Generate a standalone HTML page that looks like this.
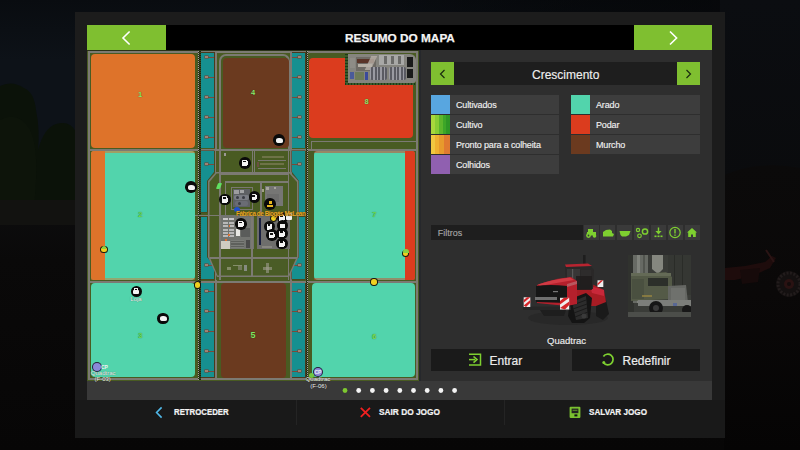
<!DOCTYPE html>
<html><head><meta charset="utf-8">
<style>
*{margin:0;padding:0;box-sizing:border-box}
html,body{width:800px;height:450px;overflow:hidden;background:#0b0b0c;font-family:"Liberation Sans",sans-serif}
.a{position:absolute}
#bg{left:0;top:0;width:800px;height:450px;background:linear-gradient(#090c10 0,#0d1218 60px,#0d1218 140px,#0c0e12 190px,#0c0c0d 215px,#0a0909 260px,#070606 450px)}
.gbtn{background:#7fbf30}
.tx{color:#eee;white-space:nowrap}
.row{background:#3d3d3d;height:19px}
.sw{width:19px;height:19px}
.mlab{text-align:center;line-height:1;white-space:nowrap;font-weight:bold}
.lbl{left:25px;top:4.6px;font-size:9px;color:#f0f0f0;letter-spacing:-0.15px;-webkit-text-stroke:0.15px #f0f0f0}
.fb{background:#3a3a3a;width:15px;height:15px;top:225px}
.bt{font-size:9.2px;font-weight:bold;color:#f4f4f4;top:407px;transform-origin:0 0;-webkit-text-stroke:0.2px #f4f4f4}
</style></head><body>
<div id="bg" class="a"></div>
<!-- background scene -->
<svg class="a" style="left:0;top:0" width="800" height="450">
 <path d="M0 86 Q12 80 24 88 Q34 92 36 110 Q40 130 38 150 Q44 128 56 124 Q70 120 76 132 L76 205 L0 205 Z" fill="#0b1209"/>
 <path d="M0 120 Q18 110 30 130 Q40 150 34 205 L0 205Z" fill="#0e160b" opacity=".7"/>
 <rect x="0" y="200" width="76" height="25" fill="#121210"/>
 <defs><linearGradient id="skyr" x1="0" y1="0" x2="0" y2="1"><stop offset="0" stop-color="#0b0d11"/><stop offset="1" stop-color="#0a0b0d"/></linearGradient></defs><rect x="712" y="0" width="88" height="185" fill="url(#skyr)"/><defs><linearGradient id="topr" x1="0" y1="0" x2="1" y2="0"><stop offset="0" stop-color="#000" stop-opacity="0"/><stop offset="1" stop-color="#050608" stop-opacity=".7"/></linearGradient></defs><rect x="380" y="0" width="340" height="12" fill="url(#topr)"/><defs><linearGradient id="hill" x1="0" y1="0" x2="0" y2="1"><stop offset="0" stop-color="#0b0a0a"/><stop offset="0.45" stop-color="#0a0808"/><stop offset="1" stop-color="#050404"/></linearGradient></defs><path d="M724 175 Q760 160 800 168 L800 450 L724 450Z" fill="url(#hill)"/>
 <path d="M725 268 L745 266 L765 262 L772 256 L776 258 L770 268 L752 276 L735 280 L725 280 Z" fill="#1e0c0c"/>
 <path d="M740 270 L760 268 L758 282 L742 284 Z" fill="#160a0a"/>
 <path d="M766 250 L774 262" stroke="#2a1414" stroke-width="2"/>
 <circle cx="789" cy="284" r="13" fill="#141010"/>
 <circle cx="789" cy="284" r="11" fill="none" stroke="#221c1c" stroke-width="3" stroke-dasharray="2 1.5"/>
 <circle cx="789" cy="284" r="5" fill="#2a1212"/>
 <circle cx="789" cy="284" r="2" fill="#140c0c"/>
 </svg>
<div class="a" style="left:75px;top:12px;width:650px;height:426px;background:#1c1c1c"></div>

<!-- header -->
<div class="a gbtn" style="left:87px;top:25px;width:79px;height:25px"></div>
<div class="a" style="left:166px;top:25px;width:468px;height:25px;background:#000"></div>
<div class="a gbtn" style="left:634px;top:25px;width:78px;height:25px"></div>
<div class="a tx" style="left:345px;top:31px;font-size:11.8px;font-weight:bold;color:#f4f4f4;-webkit-text-stroke:0.25px #f4f4f4">RESUMO DO MAPA</div>
<svg class="a" style="left:120px;top:30px" width="12" height="16" viewBox="0 0 12 16"><path d="M9.6 1.5 L3 8 L9.6 14.5" stroke="#fff" stroke-width="1.6" fill="none"/></svg>
<svg class="a" style="left:667px;top:30px" width="12" height="16" viewBox="0 0 12 16"><path d="M3 1.5 L9.6 8 L3 14.5" stroke="#fff" stroke-width="1.6" fill="none"/></svg>

<!-- map -->
<div id="map" class="a" style="left:0;top:0;width:800px;height:450px;clip-path:inset(50px 381px 69px 87px)">
<div class="a" style="left:87px;top:50px;width:332px;height:331px;background:#495b22;"></div>
<div class="a" style="left:87px;top:50px;width:332px;height:1px;background:#2a3218;"></div>
<div class="a" style="left:88px;top:51px;width:330px;height:2px;background:#7c7a73;"></div>
<div class="a" style="left:88px;top:51px;width:2px;height:329px;background:#7c7a73;"></div>
<div class="a" style="left:88px;top:378px;width:330px;height:2px;background:#7c7a73;"></div>
<div class="a" style="left:416px;top:51px;width:2px;height:329px;background:#7c7a73;"></div>
<div class="a" style="left:88px;top:149px;width:330px;height:2px;background:#7c7a73;"></div>
<div class="a" style="left:88px;top:281px;width:330px;height:1.5px;background:#7c7a73;"></div>
<div class="a" style="left:215px;top:51px;width:1.5px;height:329px;background:#7c7a73;"></div>
<div class="a" style="left:290px;top:51px;width:1.5px;height:329px;background:#7c7a73;"></div>
<div class="a" style="left:198px;top:51px;width:1px;height:329px;background:#a8a49c;background-image:repeating-linear-gradient(#a8a49c 0 1px,#2a2a1a 1px 2px)"></div>
<div class="a" style="left:199px;top:51px;width:1.5px;height:329px;background:#26301a;background-image:repeating-linear-gradient(#1a2410 0 1px,#3a4a20 1px 2px)"></div>
<div class="a" style="left:307px;top:51px;width:1px;height:329px;background:#a8a49c;background-image:repeating-linear-gradient(#a8a49c 0 1px,#2a2a1a 1px 2px)"></div>
<div class="a" style="left:305.5px;top:51px;width:1.5px;height:329px;background:#26301a;background-image:repeating-linear-gradient(#1a2410 0 1px,#3a4a20 1px 2px)"></div>
<div class="a" style="left:200.5px;top:52.0px;width:14px;height:96.0px;background:#4a3a1e;"></div>
<div class="a" style="left:201px;top:52.5px;width:13px;height:95.0px;background:#169090;"></div>
<div class="a" style="left:291.5px;top:52.0px;width:14px;height:96.0px;background:#4a3a1e;"></div>
<div class="a" style="left:292px;top:52.5px;width:13px;height:95.0px;background:#169090;"></div>
<div class="a" style="left:200.5px;top:282.5px;width:14px;height:95px;background:#4a3a1e;"></div>
<div class="a" style="left:201px;top:283px;width:13px;height:94px;background:#169090;"></div>
<div class="a" style="left:291.5px;top:282.5px;width:14px;height:95px;background:#4a3a1e;"></div>
<div class="a" style="left:292px;top:283px;width:13px;height:94px;background:#169090;"></div>
<div class="a" style="left:195px;top:145px;width:25px;height:75px;background:#4a3a1e;clip-path:polygon(5.5px 5.5px,19.5px 5.5px,19.5px 27px,12.5px 36px,12.5px 67.5px,5.5px 67.5px)"></div>
<div class="a" style="left:195px;top:145px;width:25px;height:75px;background:#169090;clip-path:polygon(6px 6px,19px 6px,19px 27px,12px 36px,12px 67px,6px 67px)"></div>
<div class="a" style="left:195px;top:210px;width:25px;height:75px;background:#4a3a1e;clip-path:polygon(5.5px 6.5px,12.5px 6.5px,12.5px 47px,19.5px 56px,19.5px 69.5px,5.5px 69.5px)"></div>
<div class="a" style="left:195px;top:210px;width:25px;height:75px;background:#169090;clip-path:polygon(6px 7px,12px 7px,12px 47px,19px 56px,19px 69px,6px 69px)"></div>
<div class="a" style="left:285px;top:145px;width:25px;height:75px;background:#4a3a1e;clip-path:polygon(6.5px 5.5px,20.5px 5.5px,20.5px 67.5px,13.5px 67.5px,13.5px 36px,6.5px 27px)"></div>
<div class="a" style="left:285px;top:145px;width:25px;height:75px;background:#169090;clip-path:polygon(7px 6px,20px 6px,20px 67px,14px 67px,14px 36px,7px 27px)"></div>
<div class="a" style="left:285px;top:210px;width:25px;height:75px;background:#4a3a1e;clip-path:polygon(13.5px 6.5px,20.5px 6.5px,20.5px 69.5px,6.5px 69.5px,6.5px 56px,13.5px 47px)"></div>
<div class="a" style="left:285px;top:210px;width:25px;height:75px;background:#169090;clip-path:polygon(14px 7px,20px 7px,20px 69px,7px 69px,7px 56px,14px 47px)"></div>
<div class="a" style="left:206px;top:56.5px;width:8px;height:1.5px;background:#7a4a3a;"></div>
<div class="a" style="left:205px;top:56px;width:2.8px;height:2.4px;background:#a08272;box-shadow:0 0 0 0.5px #7a3a2a"></div>
<div class="a" style="left:292px;top:56.5px;width:8px;height:1.5px;background:#7a4a3a;"></div>
<div class="a" style="left:298px;top:56px;width:2.8px;height:2.4px;background:#a08272;box-shadow:0 0 0 0.5px #7a3a2a"></div>
<div class="a" style="left:206px;top:76.5px;width:8px;height:1.5px;background:#7a4a3a;"></div>
<div class="a" style="left:205px;top:76px;width:2.8px;height:2.4px;background:#a08272;box-shadow:0 0 0 0.5px #7a3a2a"></div>
<div class="a" style="left:292px;top:76.5px;width:8px;height:1.5px;background:#7a4a3a;"></div>
<div class="a" style="left:298px;top:76px;width:2.8px;height:2.4px;background:#a08272;box-shadow:0 0 0 0.5px #7a3a2a"></div>
<div class="a" style="left:206px;top:96.5px;width:8px;height:1.5px;background:#7a4a3a;"></div>
<div class="a" style="left:205px;top:96px;width:2.8px;height:2.4px;background:#a08272;box-shadow:0 0 0 0.5px #7a3a2a"></div>
<div class="a" style="left:292px;top:96.5px;width:8px;height:1.5px;background:#7a4a3a;"></div>
<div class="a" style="left:298px;top:96px;width:2.8px;height:2.4px;background:#a08272;box-shadow:0 0 0 0.5px #7a3a2a"></div>
<div class="a" style="left:206px;top:116.5px;width:8px;height:1.5px;background:#7a4a3a;"></div>
<div class="a" style="left:205px;top:116px;width:2.8px;height:2.4px;background:#a08272;box-shadow:0 0 0 0.5px #7a3a2a"></div>
<div class="a" style="left:292px;top:116.5px;width:8px;height:1.5px;background:#7a4a3a;"></div>
<div class="a" style="left:298px;top:116px;width:2.8px;height:2.4px;background:#a08272;box-shadow:0 0 0 0.5px #7a3a2a"></div>
<div class="a" style="left:206px;top:136.5px;width:8px;height:1.5px;background:#7a4a3a;"></div>
<div class="a" style="left:205px;top:136px;width:2.8px;height:2.4px;background:#a08272;box-shadow:0 0 0 0.5px #7a3a2a"></div>
<div class="a" style="left:292px;top:136.5px;width:8px;height:1.5px;background:#7a4a3a;"></div>
<div class="a" style="left:298px;top:136px;width:2.8px;height:2.4px;background:#a08272;box-shadow:0 0 0 0.5px #7a3a2a"></div>
<div class="a" style="left:206px;top:163.5px;width:8px;height:1.5px;background:#7a4a3a;"></div>
<div class="a" style="left:205px;top:163px;width:2.8px;height:2.4px;background:#a08272;box-shadow:0 0 0 0.5px #7a3a2a"></div>
<div class="a" style="left:292px;top:163.5px;width:8px;height:1.5px;background:#7a4a3a;"></div>
<div class="a" style="left:298px;top:163px;width:2.8px;height:2.4px;background:#a08272;box-shadow:0 0 0 0.5px #7a3a2a"></div>
<div class="a" style="left:206px;top:264.5px;width:8px;height:1.5px;background:#7a4a3a;"></div>
<div class="a" style="left:205px;top:264px;width:2.8px;height:2.4px;background:#a08272;box-shadow:0 0 0 0.5px #7a3a2a"></div>
<div class="a" style="left:292px;top:264.5px;width:8px;height:1.5px;background:#7a4a3a;"></div>
<div class="a" style="left:298px;top:264px;width:2.8px;height:2.4px;background:#a08272;box-shadow:0 0 0 0.5px #7a3a2a"></div>
<div class="a" style="left:206px;top:290.5px;width:8px;height:1.5px;background:#7a4a3a;"></div>
<div class="a" style="left:205px;top:290px;width:2.8px;height:2.4px;background:#a08272;box-shadow:0 0 0 0.5px #7a3a2a"></div>
<div class="a" style="left:292px;top:290.5px;width:8px;height:1.5px;background:#7a4a3a;"></div>
<div class="a" style="left:298px;top:290px;width:2.8px;height:2.4px;background:#a08272;box-shadow:0 0 0 0.5px #7a3a2a"></div>
<div class="a" style="left:206px;top:310.5px;width:8px;height:1.5px;background:#7a4a3a;"></div>
<div class="a" style="left:205px;top:310px;width:2.8px;height:2.4px;background:#a08272;box-shadow:0 0 0 0.5px #7a3a2a"></div>
<div class="a" style="left:292px;top:310.5px;width:8px;height:1.5px;background:#7a4a3a;"></div>
<div class="a" style="left:298px;top:310px;width:2.8px;height:2.4px;background:#a08272;box-shadow:0 0 0 0.5px #7a3a2a"></div>
<div class="a" style="left:206px;top:330.5px;width:8px;height:1.5px;background:#7a4a3a;"></div>
<div class="a" style="left:205px;top:330px;width:2.8px;height:2.4px;background:#a08272;box-shadow:0 0 0 0.5px #7a3a2a"></div>
<div class="a" style="left:292px;top:330.5px;width:8px;height:1.5px;background:#7a4a3a;"></div>
<div class="a" style="left:298px;top:330px;width:2.8px;height:2.4px;background:#a08272;box-shadow:0 0 0 0.5px #7a3a2a"></div>
<div class="a" style="left:206px;top:350.5px;width:8px;height:1.5px;background:#7a4a3a;"></div>
<div class="a" style="left:205px;top:350px;width:2.8px;height:2.4px;background:#a08272;box-shadow:0 0 0 0.5px #7a3a2a"></div>
<div class="a" style="left:292px;top:350.5px;width:8px;height:1.5px;background:#7a4a3a;"></div>
<div class="a" style="left:298px;top:350px;width:2.8px;height:2.4px;background:#a08272;box-shadow:0 0 0 0.5px #7a3a2a"></div>
<div class="a" style="left:206px;top:370.5px;width:8px;height:1.5px;background:#7a4a3a;"></div>
<div class="a" style="left:205px;top:370px;width:2.8px;height:2.4px;background:#a08272;box-shadow:0 0 0 0.5px #7a3a2a"></div>
<div class="a" style="left:292px;top:370.5px;width:8px;height:1.5px;background:#7a4a3a;"></div>
<div class="a" style="left:298px;top:370px;width:2.8px;height:2.4px;background:#a08272;box-shadow:0 0 0 0.5px #7a3a2a"></div>
<div class="a" style="left:91px;top:54px;width:104px;height:94px;background:#de732a;border-radius:4px;"></div>
<div class="a" style="left:218.5px;top:53.5px;width:71px;height:96px;background:transparent;border:2px solid #7c7a73;border-radius:7px 7px 0 0;border-bottom:none"></div>
<div class="a" style="left:222.5px;top:58px;width:66px;height:90px;background:#6b3a1f;border-radius:4px;"></div>
<div class="a" style="left:309px;top:57.5px;width:104px;height:80px;background:#db3c1e;border-radius:4px;"></div>
<div class="a" style="left:345px;top:53px;width:71px;height:32px;background:#495b22;"></div>
<div class="a" style="left:345px;top:54px;width:2.5px;height:31px;background:#26401e;background-image:repeating-linear-gradient(#1c3818 0 1.5px,#3a5a2a 1.5px 3px)"></div>
<div class="a" style="left:345px;top:82.5px;width:71px;height:2.5px;background:#26401e;background-image:repeating-linear-gradient(90deg,#1c3818 0 1.5px,#3a5a2a 1.5px 3px)"></div>
<div class="a" style="left:347.5px;top:53.5px;width:68.5px;height:29px;background:#85847e;border-radius:0 6px 3px 0"></div>
<div class="a" style="left:356px;top:57px;width:20px;height:14px;background:#6e6a64;"></div>
<div class="a" style="left:357px;top:59px;width:17px;height:4px;background:#5a3428;"></div>
<div class="a" style="left:358px;top:64px;width:14px;height:3px;background:#c8c0b4;opacity:.8"></div>
<div class="a" style="left:368px;top:56px;width:6px;height:14px;background:#b8b0a8;transform:skewX(-25deg);opacity:.8"></div>
<div class="a" style="left:350px;top:58px;width:5px;height:10px;background:#8e8c86;"></div>
<div class="a" style="left:379px;top:55px;width:25px;height:10px;background:#a8a8a6;"></div>
<div class="a" style="left:384px;top:56px;width:3px;height:8px;background:#6a6a68;"></div>
<div class="a" style="left:391px;top:56px;width:3px;height:8px;background:#6a6a68;"></div>
<div class="a" style="left:398px;top:56px;width:3px;height:8px;background:#6a6a68;"></div>
<div class="a" style="left:407px;top:57px;width:6px;height:10px;background:#1a1a1a;"></div>
<div class="a" style="left:407px;top:69px;width:6px;height:9px;background:#1a1a1a;"></div>
<div class="a" style="left:350px;top:72px;width:4px;height:7px;background:#4a5a9a;"></div>
<div class="a" style="left:365px;top:72px;width:2.5px;height:8px;background:#3a4a9a;"></div>
<div class="a" style="left:355px;top:72px;width:9px;height:8px;background:#6e7a58;"></div>
<div class="a" style="left:370px;top:67px;width:17px;height:13px;background:#6a6a70;border-radius:2px;background-image:repeating-linear-gradient(90deg,#9a9aa2 0 1.5px,#5a5a62 1.5px 3.5px)"></div>
<div class="a" style="left:389px;top:67px;width:17px;height:13px;background:#6a6a70;border-radius:2px;background-image:repeating-linear-gradient(90deg,#9a9aa2 0 1.5px,#5a5a62 1.5px 3.5px)"></div>
<div class="a" style="left:311px;top:140.5px;width:105px;height:1.8px;background:#7c7a73;"></div>
<div class="a" style="left:310.5px;top:140.5px;width:1.8px;height:9px;background:#7c7a73;"></div>
<div class="a" style="left:91px;top:151px;width:104px;height:128.5px;background:#52d4ac;border-radius:4px;"></div>
<div class="a" style="left:91px;top:151px;width:13.5px;height:128.5px;background:#de732a;border-radius:3px 0 0 3px"></div>
<div class="a" style="left:91px;top:151px;width:104px;height:1.5px;background:#de732a;opacity:.55;border-radius:3px 3px 0 0"></div>
<div class="a" style="left:91px;top:278px;width:104px;height:1.5px;background:#de732a;opacity:.45"></div>
<div class="a" style="left:313.5px;top:151px;width:101.5px;height:128.5px;background:#52d4ac;border-radius:4px;"></div>
<div class="a" style="left:404.5px;top:151px;width:10.5px;height:128.5px;background:#db3c1e;border-radius:0 3px 3px 0"></div>
<div class="a" style="left:313.5px;top:151px;width:101.5px;height:1.5px;background:#db3c1e;opacity:.5;border-radius:3px 3px 0 0"></div>
<div class="a" style="left:313.5px;top:278px;width:101.5px;height:1.5px;background:#db3c1e;opacity:.45"></div>
<div class="a" style="left:91px;top:283px;width:104px;height:94px;background:#52d4ac;border-radius:4px;"></div>
<div class="a" style="left:220.5px;top:283px;width:65.5px;height:94.5px;background:#6b3a1f;border-radius:4px;"></div>
<div class="a" style="left:311.5px;top:283px;width:103.5px;height:94px;background:#52d4ac;border-radius:4px;"></div>
<div class="a" style="left:215.5px;top:151px;width:74.5px;height:129px;background:#495b22;"></div>
<div class="a" style="left:205px;top:165px;width:97px;height:116px;background:#7c7a73;clip-path:polygon(11px 7px,85px 7px,93.5px 16px,93.5px 92px,84px 112px,12px 112px,3px 92px,3px 16px)"></div>
<div class="a" style="left:205px;top:165px;width:97px;height:116px;background:#4a5c23;clip-path:polygon(11.599999999999994px 8.5px,84.39999999999998px 8.5px,92px 17px,92px 91.5px,83.39999999999998px 110.5px,12.599999999999994px 110.5px,4.5px 91.5px,4.5px 17px)"></div>
<div class="a" style="left:219px;top:151px;width:1.6px;height:129px;background:#7c7a73;"></div>
<div class="a" style="left:287.5px;top:151px;width:1.6px;height:129px;background:#7c7a73;"></div>
<div class="a" style="left:251.5px;top:151px;width:1.3px;height:22px;background:#7c7a73;"></div>
<div class="a" style="left:254px;top:151px;width:1.3px;height:22px;background:#7c7a73;"></div>
<div class="a" style="left:219px;top:173px;width:70px;height:1.5px;background:#7c7a73;"></div>
<div class="a" style="left:262px;top:156px;width:22px;height:2px;background:#a89880;opacity:.4"></div>
<div class="a" style="left:260px;top:163px;width:24px;height:2px;background:#a89880;opacity:.4"></div>
<div class="a" style="left:258px;top:160px;width:28px;height:1px;background:#7a7870;"></div>
<div class="a" style="left:258px;top:167.5px;width:28px;height:1px;background:#7a7870;"></div>
<div class="a" style="left:257px;top:162px;width:2px;height:5px;background:#6a5040;"></div>
<div class="a" style="left:224.5px;top:181px;width:63px;height:1.5px;background:#7c7a73;"></div>
<div class="a" style="left:224.5px;top:181px;width:1.5px;height:34px;background:#7c7a73;"></div>
<div class="a" style="left:260px;top:181px;width:1.5px;height:34px;background:#7c7a73;"></div>
<div class="a" style="left:231px;top:187px;width:21.5px;height:23px;background:transparent;border:1.2px solid #7a7870"></div>
<div class="a" style="left:233px;top:189px;width:17px;height:18px;background:#5e6064;"></div>
<div class="a" style="left:234px;top:190px;width:5px;height:4px;background:#b8b8b8;opacity:.7"></div>
<div class="a" style="left:240px;top:190px;width:4px;height:3px;background:#d0d0d0;opacity:.6"></div>
<div class="a" style="left:234px;top:195px;width:15px;height:5px;background:#7a7c84;border-radius:2px"></div>
<div class="a" style="left:235px;top:201px;width:13px;height:5px;background:#6a6c74;border-radius:2px"></div>
<div class="a" style="left:236px;top:196px;width:3px;height:3px;background:#3a3c44;border-radius:50%"></div>
<div class="a" style="left:242px;top:196px;width:3px;height:3px;background:#3a3c44;border-radius:50%"></div>
<div class="a" style="left:238px;top:202px;width:3px;height:3px;background:#3a3c44;border-radius:50%"></div>
<div class="a" style="left:265px;top:186px;width:18px;height:20px;background:#767674;"></div>
<div class="a" style="left:266px;top:187px;width:3px;height:3px;background:#c8c4b8;opacity:.6"></div>
<div class="a" style="left:274px;top:187px;width:2px;height:2px;background:#c8c4b8;opacity:.6"></div>
<div class="a" style="left:267px;top:194px;width:12px;height:8px;background:#6a6a6a;opacity:.7"></div>
<div class="a" style="left:262px;top:189px;width:2px;height:3px;background:#c8c0b0;opacity:.7"></div>
<div class="a" style="left:195px;top:214.5px;width:110px;height:1.5px;background:#7c7a73;"></div>
<div class="a" style="left:221px;top:215px;width:33px;height:34px;background:#727470;"></div>
<div class="a" style="left:223px;top:218px;width:5px;height:2.2px;background:#c8c8c8;"></div>
<div class="a" style="left:229px;top:218px;width:5px;height:2.2px;background:#c8c8c8;"></div>
<div class="a" style="left:223px;top:222.0px;width:5px;height:2px;background:#b8b8b8;"></div>
<div class="a" style="left:229px;top:222.0px;width:5px;height:2px;background:#b8b8b8;"></div>
<div class="a" style="left:223px;top:225.3px;width:5px;height:2px;background:#b8b8b8;"></div>
<div class="a" style="left:229px;top:225.3px;width:5px;height:2px;background:#b8b8b8;"></div>
<div class="a" style="left:223px;top:228.6px;width:5px;height:2px;background:#b8b8b8;"></div>
<div class="a" style="left:229px;top:228.6px;width:5px;height:2px;background:#b8b8b8;"></div>
<div class="a" style="left:223px;top:231.9px;width:5px;height:2px;background:#b8b8b8;"></div>
<div class="a" style="left:229px;top:231.9px;width:5px;height:2px;background:#b8b8b8;"></div>
<div class="a" style="left:223px;top:235.2px;width:5px;height:2px;background:#b8b8b8;"></div>
<div class="a" style="left:229px;top:235.2px;width:5px;height:2px;background:#b8b8b8;"></div>
<div class="a" style="left:228.5px;top:225px;width:1.5px;height:1.5px;background:#e07030;"></div>
<div class="a" style="left:228px;top:234px;width:1.5px;height:1.5px;background:#e07030;"></div>
<div class="a" style="left:225px;top:239px;width:1.5px;height:1.5px;background:#e07030;"></div>
<div class="a" style="left:236px;top:229px;width:4px;height:7px;background:#e8e8e4;"></div>
<div class="a" style="left:241px;top:228px;width:9px;height:9px;background:#5a5c5a;"></div>
<div class="a" style="left:221px;top:241px;width:9px;height:8px;background:#d0ccc0;"></div>
<div class="a" style="left:231px;top:240px;width:13px;height:8px;background:#5e605c;background-image:repeating-linear-gradient(#7a7c78 0 1px,transparent 1px 2.5px)"></div>
<div class="a" style="left:246px;top:240px;width:4px;height:8px;background:#4a4a4a;"></div>
<div class="a" style="left:251px;top:215px;width:1.5px;height:62px;background:#7c7a73;"></div>
<div class="a" style="left:257px;top:215px;width:33px;height:34px;background:#6e6e6c;"></div>
<div class="a" style="left:259px;top:218px;width:1.6px;height:27px;background:#1a2040;"></div>
<div class="a" style="left:262px;top:246px;width:10px;height:1.5px;background:#9a9890;opacity:.6"></div>
<div class="a" style="left:257px;top:257px;width:40px;height:1.5px;background:#7c7a73;"></div>
<div class="a" style="left:209.5px;top:257px;width:48px;height:1.5px;background:#7c7a73;"></div>
<div class="a" style="left:222px;top:260px;width:28px;height:15px;background:#4a5c26;"></div>
<div class="a" style="left:255px;top:260px;width:31px;height:15px;background:#4a5c26;"></div>
<div class="a" style="left:227px;top:267px;width:4px;height:3px;background:#a8a890;opacity:.6"></div>
<div class="a" style="left:233px;top:265px;width:9px;height:1px;background:#c0c0b0;opacity:.5"></div>
<div class="a" style="left:238px;top:266px;width:4px;height:4px;background:#908c80;opacity:.6"></div>
<div class="a" style="left:244px;top:265px;width:3px;height:6px;background:#a0a0a8;opacity:.7"></div>
<div class="a" style="left:266px;top:263px;width:3px;height:10px;background:#a09c90;opacity:.6"></div>
<div class="a" style="left:263px;top:267px;width:9px;height:3px;background:#a09c90;opacity:.6"></div>
<div class="a" style="left:224px;top:152.5px;width:1.5px;height:3px;background:#b0a8b0;opacity:.8"></div>
<div class="a" style="left:234px;top:206.5px;width:6px;height:5px;background:#2050d0;border-radius:50%"></div>
<div class="a" style="left:217px;top:183px;width:4px;height:6px;background:#60e060;border-radius:1px;transform:skewX(-20deg)"></div>
<div class="a" style="left:273.2px;top:134.2px;width:11.6px;height:11.6px;border-radius:50%;background:#0a0a0a"></div>
<div class="a" style="left:275.5px;top:137.5px;width:7px;height:5px;border-radius:40% 50% 30% 40%;background:#f4f4f4"></div>
<div class="a" style="left:185.2px;top:181.2px;width:11.6px;height:11.6px;border-radius:50%;background:#0a0a0a"></div>
<div class="a" style="left:187.5px;top:184.5px;width:7px;height:5px;border-radius:40% 50% 30% 40%;background:#f4f4f4"></div>
<div class="a" style="left:130.5px;top:285.5px;width:11.0px;height:11.0px;border-radius:50%;background:#0a0a0a"></div>
<div class="a" style="left:133px;top:289.5px;width:6px;height:4px;background:#f4f4f4;border-radius:1px"></div>
<div class="a" style="left:134px;top:288px;width:4px;height:2px;background:transparent;border:1px solid #f4f4f4;border-bottom:none"></div>
<div class="a" style="left:157.2px;top:312.7px;width:11.6px;height:11.6px;border-radius:50%;background:#0a0a0a"></div>
<div class="a" style="left:159.5px;top:316.0px;width:7px;height:5px;border-radius:40% 50% 30% 40%;background:#f4f4f4"></div>
<div class="a" style="left:239.2px;top:157.2px;width:11.6px;height:11.6px;border-radius:50%;background:#0a0a0a"></div>
<div class="a" style="left:242.4px;top:160px;width:4.2px;height:6.2px;background:#f4f4f4;border-radius:0.6px"></div>
<div class="a" style="left:243.1px;top:160.8px;width:2.8px;height:1.7px;background:#111;"></div>
<div class="a" style="left:246.9px;top:161.4px;width:1px;height:3.8px;background:#f4f4f4;"></div>
<div class="a" style="left:246.3px;top:160.4px;width:1px;height:1.4px;background:#f4f4f4;"></div>
<div class="a" style="left:219.2px;top:193.6px;width:11.6px;height:11.6px;border-radius:50%;background:#0a0a0a"></div>
<div class="a" style="left:222.4px;top:196.4px;width:4.2px;height:6.2px;background:#f4f4f4;border-radius:0.6px"></div>
<div class="a" style="left:223.1px;top:197.20000000000002px;width:2.8px;height:1.7px;background:#111;"></div>
<div class="a" style="left:226.9px;top:197.8px;width:1px;height:3.8px;background:#f4f4f4;"></div>
<div class="a" style="left:226.3px;top:196.8px;width:1px;height:1.4px;background:#f4f4f4;"></div>
<div class="a" style="left:248.5px;top:191.29999999999998px;width:11.6px;height:11.6px;border-radius:50%;background:#0a0a0a"></div>
<div class="a" style="left:251.70000000000002px;top:194.1px;width:4.2px;height:6.2px;background:#f4f4f4;border-radius:0.6px"></div>
<div class="a" style="left:252.4px;top:194.9px;width:2.8px;height:1.7px;background:#111;"></div>
<div class="a" style="left:256.2px;top:195.5px;width:1px;height:3.8px;background:#f4f4f4;"></div>
<div class="a" style="left:255.60000000000002px;top:194.5px;width:1px;height:1.4px;background:#f4f4f4;"></div>
<div class="a" style="left:264.2px;top:198.29999999999998px;width:11.6px;height:11.6px;border-radius:50%;background:#0a0a0a"></div>
<div class="a" style="left:267px;top:204.6px;width:6px;height:2px;background:#e8b820;"></div>
<div class="a" style="left:268.5px;top:201.1px;width:3px;height:3px;background:#e8b820;"></div>
<div class="a" style="left:235.2px;top:218.2px;width:11.6px;height:11.6px;border-radius:50%;background:#0a0a0a"></div>
<div class="a" style="left:238.4px;top:221px;width:4.2px;height:6.2px;background:#f4f4f4;border-radius:0.6px"></div>
<div class="a" style="left:239.1px;top:221.8px;width:2.8px;height:1.7px;background:#111;"></div>
<div class="a" style="left:242.9px;top:222.4px;width:1px;height:3.8px;background:#f4f4f4;"></div>
<div class="a" style="left:242.3px;top:221.4px;width:1px;height:1.4px;background:#f4f4f4;"></div>
<div class="a" style="left:276.5px;top:212.0px;width:11.0px;height:11.0px;border-radius:50%;background:#0a0a0a"></div>
<div class="a" style="left:279.4px;top:214.5px;width:4.2px;height:6.2px;background:#f4f4f4;border-radius:0.6px"></div>
<div class="a" style="left:280.1px;top:215.3px;width:2.8px;height:1.7px;background:#111;"></div>
<div class="a" style="left:283.9px;top:215.9px;width:1px;height:3.8px;background:#f4f4f4;"></div>
<div class="a" style="left:283.3px;top:214.9px;width:1px;height:1.4px;background:#f4f4f4;"></div>
<div class="a" style="left:263.7px;top:220.7px;width:11.6px;height:11.6px;border-radius:50%;background:#0a0a0a"></div>
<div class="a" style="left:266.9px;top:223.5px;width:4.2px;height:6.2px;background:#f4f4f4;border-radius:0.6px"></div>
<div class="a" style="left:267.6px;top:224.3px;width:2.8px;height:1.7px;background:#111;"></div>
<div class="a" style="left:271.4px;top:224.9px;width:1px;height:3.8px;background:#f4f4f4;"></div>
<div class="a" style="left:270.8px;top:223.9px;width:1px;height:1.4px;background:#f4f4f4;"></div>
<div class="a" style="left:276.5px;top:220.0px;width:11.0px;height:11.0px;border-radius:50%;background:#0a0a0a"></div>
<div class="a" style="left:279.5px;top:223.5px;width:5px;height:4px;background:#f4f4f4;"></div>
<div class="a" style="left:266.2px;top:229.39999999999998px;width:11.6px;height:11.6px;border-radius:50%;background:#0a0a0a"></div>
<div class="a" style="left:269.4px;top:232.2px;width:4.2px;height:6.2px;background:#f4f4f4;border-radius:0.6px"></div>
<div class="a" style="left:270.1px;top:233.0px;width:2.8px;height:1.7px;background:#111;"></div>
<div class="a" style="left:273.9px;top:233.6px;width:1px;height:3.8px;background:#f4f4f4;"></div>
<div class="a" style="left:273.3px;top:232.6px;width:1px;height:1.4px;background:#f4f4f4;"></div>
<div class="a" style="left:276.2px;top:227.7px;width:11.6px;height:11.6px;border-radius:50%;background:#0a0a0a"></div>
<div class="a" style="left:279.4px;top:230.5px;width:4.2px;height:6.2px;background:#f4f4f4;border-radius:0.6px"></div>
<div class="a" style="left:280.1px;top:231.3px;width:2.8px;height:1.7px;background:#111;"></div>
<div class="a" style="left:283.9px;top:231.9px;width:1px;height:3.8px;background:#f4f4f4;"></div>
<div class="a" style="left:283.3px;top:230.9px;width:1px;height:1.4px;background:#f4f4f4;"></div>
<div class="a" style="left:276.2px;top:237.7px;width:11.6px;height:11.6px;border-radius:50%;background:#0a0a0a"></div>
<div class="a" style="left:279.4px;top:240.5px;width:4.2px;height:6.2px;background:#f4f4f4;border-radius:0.6px"></div>
<div class="a" style="left:280.1px;top:241.3px;width:2.8px;height:1.7px;background:#111;"></div>
<div class="a" style="left:283.9px;top:241.9px;width:1px;height:3.8px;background:#f4f4f4;"></div>
<div class="a" style="left:283.3px;top:240.9px;width:1px;height:1.4px;background:#f4f4f4;"></div>
<div class="a" style="left:286px;top:212.5px;width:6px;height:7px;background:#f0f0f0;border-radius:1px"></div>
<div class="a" style="left:287.5px;top:214px;width:3px;height:2px;background:#222;"></div>
<div class="a" style="left:193.8px;top:281.3px;width:7.4px;height:7.4px;border-radius:50%;background:#1a1a10"></div>
<div class="a" style="left:194.8px;top:282.3px;width:5.4px;height:5.4px;border-radius:50%;background:#f0d020"></div>
<div class="a" style="left:370.3px;top:278.3px;width:7.4px;height:7.4px;border-radius:50%;background:#1a1a10"></div>
<div class="a" style="left:371.3px;top:279.3px;width:5.4px;height:5.4px;border-radius:50%;background:#f0d020"></div>
<div class="a" style="left:100.4px;top:245.9px;width:7.2px;height:7.2px;border-radius:50%;background:#1a1a10"></div>
<div class="a" style="left:101.4px;top:246.9px;width:5.2px;height:5.2px;border-radius:50%;background:#f0d020"></div>
<div class="a" style="left:101.6px;top:246px;width:4.8px;height:3px;border-radius:2.4px 2.4px 0 0;background:#8ad040"></div>
<div class="a" style="left:270.1px;top:215.1px;width:6.8px;height:6.8px;border-radius:50%;background:#1a1a10"></div>
<div class="a" style="left:271.1px;top:216.1px;width:4.8px;height:4.8px;border-radius:50%;background:#f0d020"></div>
<div class="a" style="left:401.9px;top:249.9px;width:7.2px;height:7.2px;border-radius:50%;background:#1a1a10"></div>
<div class="a" style="left:402.9px;top:250.9px;width:5.2px;height:5.2px;border-radius:50%;background:#f0d020"></div>
<div class="a" style="left:402.5px;top:249px;width:6px;height:4px;border-radius:3px 3px 0 0;background:#8ad040"></div>
<div class="a" style="left:92px;top:362.4px;width:10px;height:10px;border-radius:50%;background:#24203a"></div>
<div class="a" style="left:93px;top:363.4px;width:8px;height:8px;border-radius:50%;background:#8a88d8"></div>
<div class="a" style="left:313px;top:366.5px;width:10px;height:10px;border-radius:50%;background:#24203a"></div>
<div class="a" style="left:314px;top:367.5px;width:8px;height:8px;border-radius:50%;background:#8a88d8"></div>
<div class="a" style="left:308.5px;top:372.5px;width:5px;height:5px;border-radius:50%;background:#70c840"></div>

</div>

<!-- right panel -->
<div class="a" style="left:419px;top:50px;width:293px;height:331px;background:#2e2e2e"></div>
<div class="a" style="left:419px;top:50px;width:2px;height:331px;background:#26282c"></div>
<div class="a gbtn" style="left:431px;top:62px;width:23px;height:23px"></div>
<div class="a" style="left:454px;top:62px;width:223px;height:23px;background:#1e1e1e"></div>
<div class="a gbtn" style="left:677px;top:62px;width:23px;height:23px"></div>
<svg class="a" style="left:431px;top:62px" width="23" height="23"><path d="M13.5 8 L9.5 12 L13.5 16" stroke="#1a2a10" stroke-width="1.2" fill="none"/></svg>
<svg class="a" style="left:677px;top:62px" width="23" height="23"><path d="M9.5 8 L13.5 12 L9.5 16" stroke="#1a2a10" stroke-width="1.2" fill="none"/></svg>
<div class="a tx" style="left:532px;top:67.5px;font-size:12px;color:#eee;-webkit-text-stroke:0.15px #eee">Crescimento</div>

<!-- legend -->
<div class="a row" style="left:431px;top:95px;width:128px"><div class="a sw" style="background:#58a6e0"></div><div class="a tx lbl">Cultivados</div></div>
<div class="a row" style="left:431px;top:115px;width:128px"><div class="a sw" style="background:linear-gradient(90deg,#a8d83c 0 4px,#88cc34 4px 8px,#5cb62c 8px 12px,#3da628 12px 15px,#2e9626 15px)"></div><div class="a tx lbl">Cultivo</div></div>
<div class="a row" style="left:431px;top:135px;width:128px"><div class="a sw" style="background:linear-gradient(90deg,#f2c840 0 4px,#f0b030 4px 8px,#e89a2c 8px 13px,#e07a30 13px)"></div><div class="a tx lbl">Pronto para a colheita</div></div>
<div class="a row" style="left:431px;top:155px;width:128px"><div class="a sw" style="background:#9060b0"></div><div class="a tx lbl">Colhidos</div></div>
<div class="a row" style="left:571px;top:95px;width:129px"><div class="a sw" style="background:#52d4ac"></div><div class="a tx lbl">Arado</div></div>
<div class="a row" style="left:571px;top:115px;width:129px"><div class="a sw" style="background:#db3c1e"></div><div class="a tx lbl">Podar</div></div>
<div class="a row" style="left:571px;top:135px;width:129px"><div class="a sw" style="background:#6b3a1f"></div><div class="a tx lbl">Murcho</div></div>

<!-- filters -->
<div class="a" style="left:431px;top:225px;width:152px;height:15px;background:#1e1e1e"></div>
<div class="a tx" style="left:437.7px;top:228px;font-size:9px;color:#a4a4a4;-webkit-text-stroke:0.15px #a4a4a4">Filtros</div>
<div class="a fb" style="left:583.5px"></div>
<div class="a fb" style="left:600px"></div>
<div class="a fb" style="left:617px"></div>
<div class="a fb" style="left:634px"></div>
<div class="a fb" style="left:651px"></div>
<div class="a fb" style="left:667.5px"></div>
<div class="a fb" style="left:684.5px"></div>
<svg class="a" style="left:0;top:0" width="800" height="450" fill="#7ed030" stroke="none">
 <!-- tractor -->
 <rect x="588" y="229" width="5" height="4"/><rect x="587" y="232" width="9" height="3.5"/>
 <circle cx="588.5" cy="235.5" r="2.4"/><circle cx="594.5" cy="236" r="1.8"/>
 <circle cx="588.5" cy="235.5" r="0.9" fill="#3a3a3a"/>
 <!-- harvester -->
 <path d="M603 232 L606 230 L610 229.5 L612 231 L612 233 L614 234 L613 236.5 L603 236.5 Z"/>
 <!-- trailer -->
 <path d="M619.5 231 L630.5 231 L629 235 L626 236.5 L622 236.5 L620.5 235 Z"/>
 <!-- gears -->
 <circle cx="645" cy="231.5" r="2.6" fill="none" stroke="#7ed030" stroke-width="1.5"/>
 <circle cx="638" cy="230" r="1.6" fill="none" stroke="#7ed030" stroke-width="1.2"/>
 <circle cx="639.5" cy="235.8" r="1.8" fill="none" stroke="#7ed030" stroke-width="1.2"/>
 <!-- download -->
 <path d="M657.8 227.5 h1.4 v3.5 h2.4 l-3.1 3.4 l-3.1 -3.4 h2.4z"/>
 <rect x="654.5" y="235.5" width="2" height="1.6"/><rect x="657.5" y="235.5" width="2" height="1.6"/><rect x="660.5" y="235.5" width="2" height="1.6"/>
 <!-- ! -->
 <circle cx="675" cy="232.5" r="5.2" fill="none" stroke="#7ed030" stroke-width="1.2"/>
 <rect x="674.3" y="229" width="1.4" height="4.5"/><rect x="674.3" y="234.5" width="1.4" height="1.3"/>
 <!-- home -->
 <path d="M692 228 L697 232.5 L695.8 232.5 L695.8 237 L688.2 237 L688.2 232.5 L687 232.5 Z"/>
 <rect x="691" y="234.5" width="2" height="2.5" fill="#3a3a3a"/>
</svg>

<!-- vehicles -->
<svg class="a" style="left:0;top:0" width="800" height="450">
 <ellipse cx="568" cy="318" rx="40" ry="7" fill="#282828"/>
 <!-- rear track -->
 <path d="M596 296 L606 300 L609 314 L603 320 L596 316 Z" fill="#1a1a1a"/>
 <!-- rear body -->
 <path d="M574 286 L592 284 L604 290 L606 302 L596 306 L576 306 Z" fill="#a81c24"/>
 <path d="M590 286 L604 290 L604 296 L592 293 Z" fill="#c8283a"/>
 <!-- front track -->
 <path d="M570 299 L586 293 L592 298 L590 318 L584 323 L572 323 L568 316 Z" fill="#141414"/>
 <path d="M572 302 L586 296 L588 318 L576 320 Z" fill="#2c2c2c"/>
 <path d="M573 305 L586 300 M573 309 L587 304 M574 313 L587 308 M575 317 L588 312" stroke="#1a1a1a" stroke-width="1"/>
 <circle cx="584" cy="316" r="2.5" fill="#3a3a3a"/>
 <!-- cab -->
 <rect x="583" y="255" width="2.6" height="10" fill="#1e1e1e"/>
 <path d="M565 267 L590 265 L594 270 L593 289 L566 290 Z" fill="#2a2828"/>
 <path d="M565 264.5 L588 263.5 L592 266 L566 267 Z" fill="#b82430"/>
 <rect x="567" y="269" width="13" height="15" fill="#383636"/><rect x="572" y="269" width="1.2" height="15" fill="#5a5858"/>
 <rect x="581" y="270" width="10" height="15" fill="#2e2c2c"/>
 <path d="M576 276 L592 276 L592 290 L576 290 Z" fill="#1e1c1c" opacity=".8"/>
 <!-- hood -->
 <path d="M537 285 Q552 279 571 277 L577 281 L577 304 L567 306 L537 303 Z" fill="#b4202c"/>
 <path d="M538 284.5 Q552 279.5 570 277.5 L574 280 Q556 283 540 286 Z" fill="#d03a44"/>
 <path d="M567 284 L577 281 L577 284 L567 287 Z" fill="#c0c0c0" opacity=".35"/>
 <path d="M536 286 Q550 284 567 286 L567 303 L536 302 Z" fill="#161616"/>
 <rect x="553" y="291" width="5" height="1.2" fill="#777"/>
 <rect x="535" y="297" width="22" height="3" fill="#707070"/>
 <!-- bumper -->
 <rect x="523" y="306.5" width="48" height="3.5" fill="#262626"/>
 <path d="M540 310 L566 310 L564 316 L544 316 Z" fill="#1e1e1e"/>
 <!-- plates -->
 <rect x="523.7" y="297.3" width="6.6" height="9.7" fill="#eeeeee"/>
 <path d="M523.7 300 L527 297.3 L530.3 297.3 L523.7 302.8 Z M523.7 305.5 L530.3 300 L530.3 302.8 L526 307 Z" fill="#d42428"/>
 <rect x="560" y="297.8" width="9.2" height="11.7" fill="#eeeeee"/>
 <path d="M560 301 L564 297.8 L569.2 297.8 L560 304.5 Z M560 308 L569.2 301.5 L569.2 305 L565 309.5 Z" fill="#d42428"/>
 <rect x="597.5" y="280.3" width="5.8" height="6.7" fill="#eeeeee"/>
 <path d="M597.5 283.5 L601 280.3 L603.3 280.3 L597.5 285.5 Z" fill="#d42428"/>
</svg>
<div class="a" style="left:628px;top:255px;width:63px;height:62px;background:#3a3c38;overflow:hidden">
 <svg width="63" height="62">
  <rect x="0" y="0" width="63" height="62" fill="#3a3c38"/>
  <rect x="0" y="0" width="6" height="62" fill="#30322e"/>
  <rect x="5" y="0" width="15" height="48" fill="#676a64"/>
  <rect x="9" y="0" width="3" height="48" fill="#80837c"/>
  <rect x="15" y="0" width="2" height="48" fill="#52554f"/>
  <path d="M24 0 L35 0 L35 14 L30 19 L24 14 Z" fill="#85877f"/>
  <rect x="40" y="0" width="23" height="40" fill="#353733"/>
  <rect x="46" y="0" width="1" height="40" fill="#2a2c28"/>
  <rect x="54" y="0" width="1" height="40" fill="#2a2c28"/>
  <path d="M3 20 L38 17 L44 22 L44 44 L3 46 Z" fill="#545a47"/>
  <rect x="3" y="18" width="40" height="3" fill="#646a56"/>
  <rect x="20" y="23" width="20" height="8" fill="#2c2f2a"/>
  <rect x="4" y="24" width="12" height="20" fill="#4a5040"/>
  <path d="M40 31 L58 30 L60 48 L40 48 Z" fill="#656763"/>
  <rect x="43" y="33" width="14" height="13" fill="#7a7c78" opacity=".5"/>
  <rect x="10" y="45" width="53" height="6" fill="#7c7e7a"/>
  <rect x="14" y="40" width="10" height="2" fill="#a89040" opacity=".6"/>
  <circle cx="28" cy="53" r="7" fill="#161616"/>
  <circle cx="28" cy="53" r="3" fill="#3a3a3a"/>
  <circle cx="59" cy="55" r="5" fill="#181818"/>
  <rect x="0" y="57" width="63" height="5" fill="#4c4e4a"/>
  <rect x="45" y="48" width="4" height="3" fill="#4a60a0" opacity=".7"/>
 </svg>
</div>
<div class="a tx" style="left:547px;top:335px;font-size:9.5px;color:#ececec;-webkit-text-stroke:0.15px #ececec">Quadtrac</div>

<!-- buttons -->
<div class="a" style="left:431px;top:349px;width:129px;height:22px;background:#1a1a1a"></div>

<div class="a tx" style="left:489.5px;top:353.7px;font-size:12px;color:#ececec;-webkit-text-stroke:0.2px #ececec">Entrar</div>
<div class="a" style="left:572px;top:349px;width:128px;height:22px;background:#1a1a1a"></div>
<div class="a tx" style="left:622.5px;top:353.7px;font-size:12px;color:#ececec;-webkit-text-stroke:0.2px #ececec">Redefinir</div>
<svg class="a" style="left:0;top:0" width="800" height="450" fill="none" stroke="#7ed030">
 <path d="M469 354.3 H480.5 V365 H469" stroke-width="1.5"/>
 <path d="M469 359.6 H475" stroke-width="1.5"/>
 <path d="M473.5 356.5 L477 359.6 L473.5 362.7" stroke-width="1.6"/>
 <path d="M603.4 356.5 A5.3 5.3 0 1 1 603.6 362.8" stroke-width="1.7"/>
 <circle cx="603.8" cy="362.5" r="1.5" fill="#7ed030" stroke="none"/>
</svg>

<!-- pagination -->
<div class="a" style="left:87px;top:381px;width:625px;height:19px;background:#393939"></div>
<svg class="a" style="left:0;top:0" width="800" height="450">
 <circle cx="345" cy="390.5" r="2.4" fill="#7ec830"/>
 <g fill="#f4f4f4">
 <circle cx="358.7" cy="390.5" r="2.4"/><circle cx="372.4" cy="390.5" r="2.4"/><circle cx="386.1" cy="390.5" r="2.4"/>
 <circle cx="399.8" cy="390.5" r="2.4"/><circle cx="413.5" cy="390.5" r="2.4"/><circle cx="427.2" cy="390.5" r="2.4"/>
 <circle cx="440.9" cy="390.5" r="2.4"/><circle cx="454.6" cy="390.5" r="2.4"/>
 </g>
</svg>

<div class="a" style="left:0;top:0;width:800px;height:450px;clip-path:inset(50px 381px 60px 87px)">
<div class="a" style="left:101px;top:363.5px;font-size:5px;color:#f0f0f0;font-weight:bold">CP</div>
<div class="a" style="left:314.5px;top:368.5px;font-size:5px;color:#f0f0f0;font-weight:bold">CP</div>
<div class="a mlab" style="left:120px;top:90.8px;width:40px;font-size:7.5px;color:#8ce86a;font-weight:bold;text-shadow:0 0 1px rgba(0,0,0,.6)">1</div>
<div class="a mlab" style="left:233px;top:89.3px;width:40px;font-size:7.5px;color:#8ce86a;font-weight:bold;text-shadow:0 0 1px rgba(0,0,0,.6)">4</div>
<div class="a mlab" style="left:346.5px;top:97.8px;width:40px;font-size:7.5px;color:#8ce86a;font-weight:bold;text-shadow:0 0 1px rgba(0,0,0,.6)">8</div>
<div class="a mlab" style="left:120px;top:211.3px;width:40px;font-size:7.5px;color:#6ee04a;font-weight:bold;text-shadow:0 0 1px rgba(0,0,0,.6)">2</div>
<div class="a mlab" style="left:354px;top:211.3px;width:40px;font-size:7.5px;color:#6ee04a;font-weight:bold;text-shadow:0 0 1px rgba(0,0,0,.6)">7</div>
<div class="a mlab" style="left:120px;top:332.3px;width:40px;font-size:7.5px;color:#6ee04a;font-weight:bold;text-shadow:0 0 1px rgba(0,0,0,.6)">3</div>
<div class="a mlab" style="left:233px;top:331.40000000000003px;width:40px;font-size:9px;color:#7ee860;font-weight:bold;text-shadow:0 0 1px rgba(0,0,0,.6)">5</div>
<div class="a mlab" style="left:354px;top:333.3px;width:40px;font-size:7.5px;color:#7ee04a;font-weight:bold;text-shadow:0 0 1px rgba(0,0,0,.6)">6</div>
<div class="a mlab" style="left:116px;top:296.2px;width:40px;font-size:6px;color:#f0f4f0;font-weight:normal;text-shadow:0 0 1px rgba(0,0,0,.6)">Loja</div>
<div class="a mlab" style="left:83.2px;top:370.2px;width:40px;font-size:6px;color:#f0f4f0;font-weight:normal;text-shadow:0 0 1px rgba(0,0,0,.6)">Quadtrac</div>
<div class="a mlab" style="left:82.7px;top:376.2px;width:40px;font-size:6px;color:#f0f4f0;font-weight:normal;text-shadow:0 0 1px rgba(0,0,0,.6)">(F-03)</div>
<div class="a mlab" style="left:298px;top:375.7px;width:40px;font-size:6px;color:#f0f4f0;font-weight:normal;text-shadow:0 0 1px rgba(0,0,0,.6)">Quadtrac</div>
<div class="a mlab" style="left:298.5px;top:383.2px;width:40px;font-size:6px;color:#f0f4f0;font-weight:normal;text-shadow:0 0 1px rgba(0,0,0,.6)">(F-06)</div>
<div class="a" style="left:236px;top:209.5px;font-size:6.3px;color:#e8a828;white-space:nowrap;letter-spacing:-0.42px;font-weight:bold;text-shadow:0 0 1px #3a2a00">Fábrica de Biogás McLean</div>
</div>
<!-- bottom bar -->
<div class="a" style="left:75px;top:400px;width:650px;height:38px;background:#191919"></div>
<div class="a" style="left:295.5px;top:400px;width:1px;height:25px;background:#242424"></div>
<div class="a" style="left:503.5px;top:400px;width:1px;height:25px;background:#242424"></div>
<svg class="a" style="left:0;top:0" width="800" height="450" fill="none">
 <path d="M161.6 407.4 L156.6 412.5 L161.6 417.6" stroke="#50b8e8" stroke-width="1.6"/>
 <path d="M360.8 407.8 L370 416.8 M370 407.8 L360.8 416.8" stroke="#f02020" stroke-width="1.8"/>
 <rect x="569.6" y="406.8" width="10.8" height="11.2" rx="1" fill="#7ac030"/>
 <rect x="571.6" y="408.6" width="6.8" height="4.6" fill="#222"/>
 <rect x="572.6" y="409.8" width="4.8" height="1" fill="#7ac030" opacity=".7"/>
 <rect x="574.4" y="414.4" width="3" height="2" fill="#111"/>
</svg>
<div class="a tx bt" style="left:174px;transform:scaleX(0.85)">RETROCEDER</div>
<div class="a tx bt" style="left:379px;transform:scaleX(0.905)">SAIR DO JOGO</div>
<div class="a tx bt" style="left:589px;transform:scaleX(0.885)">SALVAR JOGO</div>
</body></html>
